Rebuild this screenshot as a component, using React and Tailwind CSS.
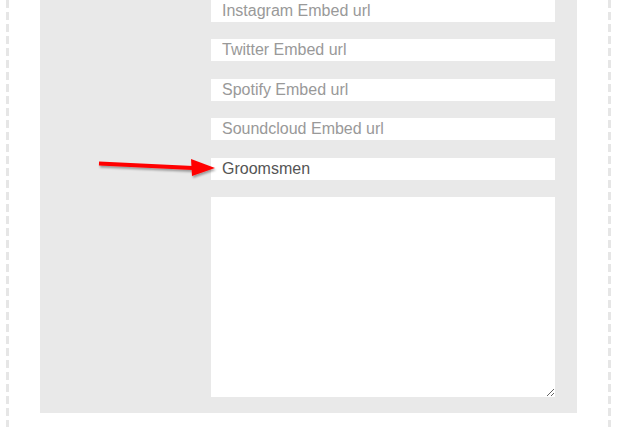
import React from "react";

const fields = [
  "Instagram Embed url",
  "Twitter Embed url",
  "Spotify Embed url",
  "Soundcloud Embed url",
];

const Dashes = () => (
  <div className="w-[3px] self-stretch bg-[linear-gradient(to_bottom,#e6e6e6_8px,transparent_8px)] bg-[length:3px_12px] bg-repeat-y" />
);

export default function App() {
  return (
    <div className="relative flex h-[427px] w-[640px] overflow-hidden bg-white font-['Liberation_Sans',Arial,sans-serif]">
      <div className="w-[6px]" />
      <Dashes />
      <div className="w-[31px]" />

      {/* form panel */}
      <div className="h-[413px] w-[537px] bg-[#e9e9e9] pb-4 pl-[171px] pr-[22px]">
        <div className="flex flex-col gap-[17.4px]">
          {fields.map((f) => (
            <input
              key={f}
              type="text"
              placeholder={f}
              className="h-[22px] w-full bg-white px-[11px] text-[16px] text-[#555] outline-none placeholder:text-[#999]"
            />
          ))}
          <input
            type="text"
            defaultValue="Groomsmen"
            className="h-[22px] w-full bg-white px-[11px] text-[16px] text-[#555] outline-none"
          />
          <textarea className="h-[200px] w-full bg-white outline-none" />
        </div>
      </div>

      <div className="w-[31px]" />
      <Dashes />

      {/* annotation arrow */}
      <svg
        className="absolute left-[95px] top-[155px]"
        width="125"
        height="28"
        viewBox="0 0 125 28"
      >
        <defs>
          <filter id="sh" x="-10%" y="-50%" width="120%" height="200%">
            <feDropShadow dx="1" dy="2" stdDeviation="1.2" floodColor="#000" floodOpacity="0.35" />
          </filter>
        </defs>
        <g filter="url(#sh)">
          <line x1="4" y1="8.5" x2="98" y2="13" stroke="#f00" strokeWidth="4" />
          <polygon points="96,4 120,13 97,21" fill="#f00" />
        </g>
      </svg>
    </div>
  );
}
